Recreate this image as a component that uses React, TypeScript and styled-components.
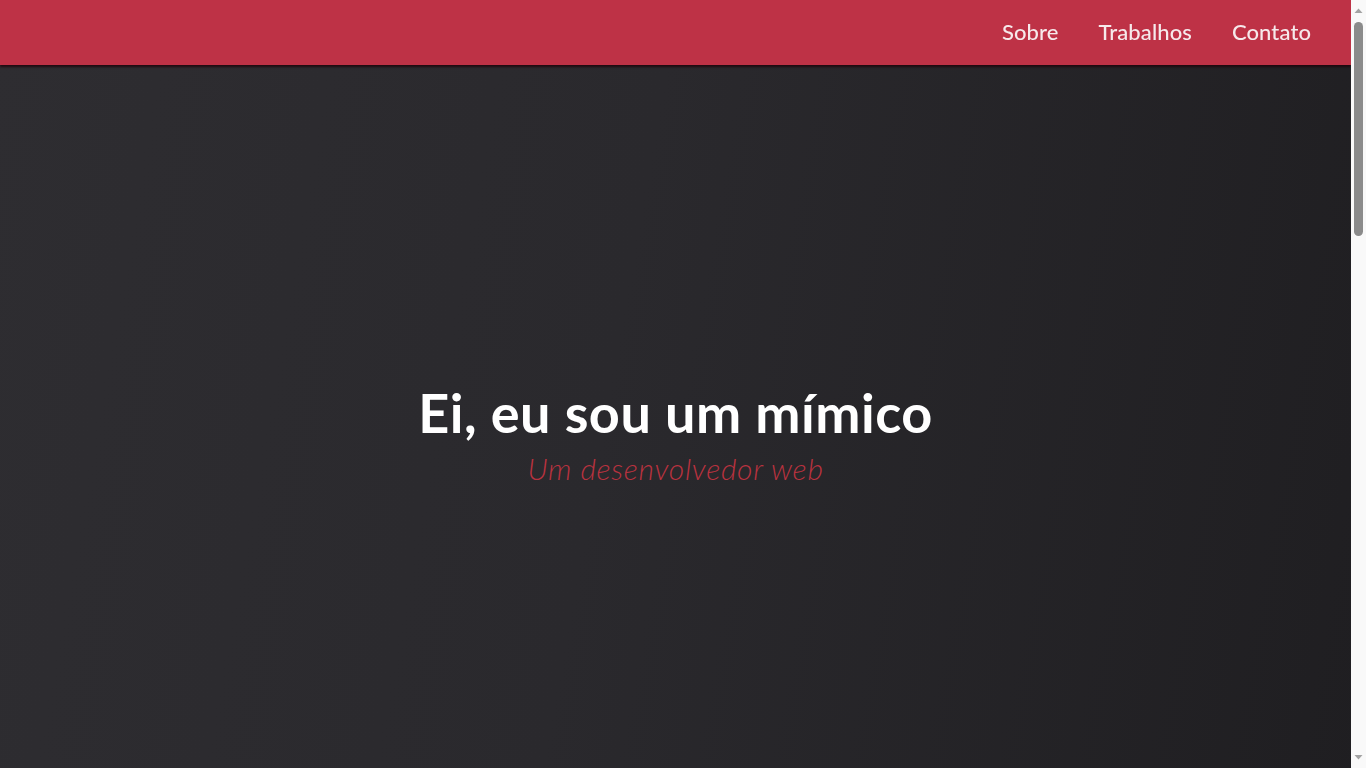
import React from "react";
import styled, { createGlobalStyle } from "styled-components";

const Global = createGlobalStyle`
  html, body { margin: 0; padding: 0; }
  html { scrollbar-width: none; }
  html::-webkit-scrollbar { display: none; }
  body {
    font-family: "Lato", "Noto Sans", sans-serif;
    background: #28272b;
    margin-right: 15px;
  }
  * { box-sizing: border-box; }
`;

const Header = styled.header`
  position: fixed;
  top: 0;
  left: 0;
  right: 15px;
  height: 65px;
  background: #be3246;
  box-shadow: 0 2px 2px rgba(30, 5, 10, 0.85);
  display: flex;
  justify-content: flex-end;
  align-items: center;
  padding: 0 40px 2px 0;
  z-index: 10;
`;

const Nav = styled.nav`
  display: flex;
  gap: 40px;
`;

const NavLink = styled.a`
  color: #f6e9eb;
  font-size: 22px;
  font-weight: 500;
  text-decoration: none;
  letter-spacing: 0.1px;
`;

const Hero = styled.section`
  height: 880px;
  background: linear-gradient(100deg, #2e2d31 0%, #2a292d 45%, #1f1e21 100%);
  display: flex;
  flex-direction: column;
  align-items: center;
  padding-top: 383px;
`;

const Title = styled.h1`
  margin: 0;
  color: #ffffff;
  font-size: 54px;
  font-weight: 700;
  line-height: 60px;
  letter-spacing: 0.5px;
`;

const Subtitle = styled.p`
  margin: 7px 0 0;
  color: #b8323f;
  font-size: 30px;
  font-weight: 300;
  font-style: italic;
  line-height: 36px;
  letter-spacing: 0.7px;
`;

const Section = styled.section`
  min-height: 600px;
  background: #1f1e21;
`;

const ScrollBar = styled.div`
  position: fixed;
  top: 0;
  right: 0;
  width: 15px;
  height: 100vh;
  background: #f9f9f9;
  display: flex;
  flex-direction: column;
  align-items: center;
  z-index: 20;
`;

const Arrow = styled.svg`
  width: 15px;
  height: 17px;
  flex: none;
`;

const Thumb = styled.div`
  width: 9px;
  height: 214px;
  margin-top: 5px;
  border-radius: 5px;
  background: #8b8b8b;
`;

const Spacer = styled.div`
  flex: 1;
`;

export default function App() {
  return (
    <>
      <Global />
      <Header>
        <Nav>
          <NavLink href="#sobre">Sobre</NavLink>
          <NavLink href="#trabalhos">Trabalhos</NavLink>
          <NavLink href="#contato">Contato</NavLink>
        </Nav>
      </Header>
      <Hero>
        <Title>Ei, eu sou um mímico</Title>
        <Subtitle>Um desenvolvedor web</Subtitle>
      </Hero>
      <Section id="sobre" />
      <Section id="trabalhos" />
      <Section id="contato" />
      <ScrollBar aria-hidden="true">
        <Arrow viewBox="0 0 15 17">
          <polygon points="3.5,13 11.5,13 7.5,8.5" fill="#a3a3a3" />
        </Arrow>
        <Thumb />
        <Spacer />
        <Arrow viewBox="0 0 15 17">
          <polygon points="3.5,4 11.5,4 7.5,8.5" fill="#a3a3a3" />
        </Arrow>
      </ScrollBar>
    </>
  );
}
